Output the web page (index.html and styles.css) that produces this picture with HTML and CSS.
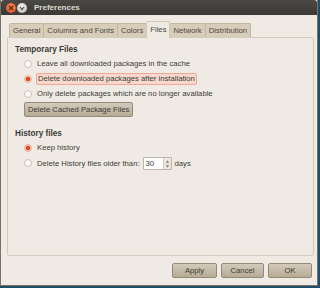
FILE: index.html
```html
<!DOCTYPE html>
<html>
<head>
<meta charset="utf-8">
<link rel="stylesheet" href="styles.css">
</head>
<body>
<div class="window">
  <div class="titlebar">
    <span class="wbtn close"><svg width="10" height="10" viewBox="0 0 10 10"><path d="M3 3 L7 7 M7 3 L3 7" stroke="#5a2a10" stroke-width="1.3"/></svg></span>
    <span class="wbtn min"><svg width="10" height="10" viewBox="0 0 10 10"><path d="M3 4 L5 6.5 L7 4" stroke="#4a4842" stroke-width="1.2" fill="none"/></svg></span>
    <span class="title">Preferences</span>
  </div>
  <div class="content">
    <div class="tabs">
      <div class="tab first">General</div>
      <div class="tab">Columns and Fonts</div>
      <div class="tab">Colors</div>
      <div class="tab active">Files</div>
      <div class="tab">Network</div>
      <div class="tab">Distribution</div>
    </div>
    <div class="panel">
      <div class="heading">Temporary Files</div>
      <div class="row"><span class="radio"></span><span class="label">Leave all downloaded packages in the cache</span></div>
      <div class="row"><span class="radio on"></span><span class="label hl">Delete downloaded packages after installation</span></div>
      <div class="row"><span class="radio"></span><span class="label">Only delete packages which are no longer available</span></div>
      <div class="btnrow"><span class="btn">Delete Cached Package Files</span></div>
      <div class="heading h2">History files</div>
      <div class="row"><span class="radio on"></span><span class="label">Keep history</span></div>
      <div class="row spinrow"><span class="radio"></span><span class="label">Delete History files older than:</span>
        <span class="spin"><span class="val">30</span><span class="arrows"><svg width="7" height="12" viewBox="0 0 7 12"><path d="M2 4.5 L3.5 2.5 L5 4.5 Z M2 7.5 L3.5 9.5 L5 7.5 Z" fill="#6a655c"/><path d="M0.5 6 H6.5" stroke="#cfc8bb" stroke-width="0.6"/></svg></span></span>
        <span class="label">days</span></div>
    </div>
    <div class="actions">
      <span class="btn abtn apply">Apply</span>
      <span class="btn abtn cancel">Cancel</span>
      <span class="btn abtn ok">OK</span>
    </div>
  </div>
</div>
</body>
</html>
```
FILE: styles.css
```css
html, body { margin: 0; padding: 0; }
body {
  width: 320px; height: 288px; overflow: hidden;
  background: #1f4e6a;
  font-family: "Liberation Sans", Arial, sans-serif;
  font-size: 7.7px;
  color: #3c3b37;
}
.window {
  width: 316px; height: 285px;
  background: #efebe4;
  border: 1px solid #77736b;
  border-top: none;
  display: flex; flex-direction: column;
  box-sizing: content-box;
}
.titlebar {
  height: 15px; flex: none;
  background: linear-gradient(#4a4945, #3a3935);
  display: flex; align-items: center;
  padding-left: 5px;
  border-radius: 3px 3px 0 0;
}
.wbtn {
  width: 10px; height: 10px; border-radius: 50%;
  display: inline-flex; margin-right: 1px;
}
.close { background: radial-gradient(circle at 50% 35%, #f48a5c, #df4a19); }
.min { background: radial-gradient(circle at 50% 35%, #f2f0ec, #bdb9b0); }
.title {
  color: #dfdbd2; font-weight: bold; font-size: 8px; margin-left: 6px;
  font-family: "Liberation Sans", Arial, sans-serif;
}
.content { flex: 1; display: flex; flex-direction: column; padding: 6px 3px 0 6px; }
.tabs { display: flex; align-items: flex-end; height: 16px; margin-left: 2px; }
.tab {
  height: 13px; line-height: 13px;
  background: #d8cdb8;
  border: 1px solid #c3b89f; border-bottom: none;
  margin-right: -1px;
  padding: 0 3px;
  color: #4a4740;
  border-radius: 2px 2px 0 0;
}
.tab.active {
  line-height: 16px;
  background: #efebe4;
  border-color: #cfc8ba;
  position: relative; z-index: 1;
  margin-bottom: -1px; height: 16px;
}
.panel {
  height: 217px;
  border: 1px solid #d3ccbd;
  border-radius: 0 2px 2px 2px;
  padding: 0 7px;
}
.heading { font-weight: bold; height: 13px; line-height: 13px; margin-top: 5px; font-size: 8.2px; }
.h2 { margin-top: 8px; }
.row { display: flex; align-items: center; height: 15px; padding-left: 9px; }
.radio {
  width: 6px; height: 6px; border-radius: 50%;
  background: #fbfaf8; border: 1px solid #c8c2b6;
  margin-right: 4px; flex: none;
}
.radio.on { background: radial-gradient(circle, #e0461a 0 2px, #f6c5b6 2.3px); border-color: #e8b2a2; }
.label { white-space: nowrap; padding: 0 1px; }
.hl { background: #fad8cd; border: 1px solid #f2a894; border-radius: 2px; line-height: 10px; }
.btnrow { padding-left: 9px; margin-top: 1px; height: 17px; }
.btn {
  display: inline-flex; align-items: center; justify-content: center;
  height: 15px; box-sizing: border-box;
  background: linear-gradient(#d3cab9, #b7ab96);
  border: 1px solid #948a78; border-radius: 2px;
  padding: 0 3px; color: #3c3b37;
}
.spinrow { height: 16px; }
.spin {
  display: inline-flex; width: 29px; height: 13px; margin-left: 2px; box-sizing: border-box;
  border: 1px solid #bdb6a8; background: #fff; border-radius: 1px;
}
.val { flex: 1; padding-left: 2px; line-height: 11px; }
.arrows { width: 7px; background: #ece8e0; border-left: 1px solid #d6d0c4; display: flex; }
.spinrow .label:last-child { margin-left: 2px; }
.actions { display: flex; justify-content: flex-end; gap: 4px; margin-top: 7px; padding-right: 2px; }
.abtn { width: 45px; }
.cancel { width: 43px; }
.ok { width: 44px; }
```
